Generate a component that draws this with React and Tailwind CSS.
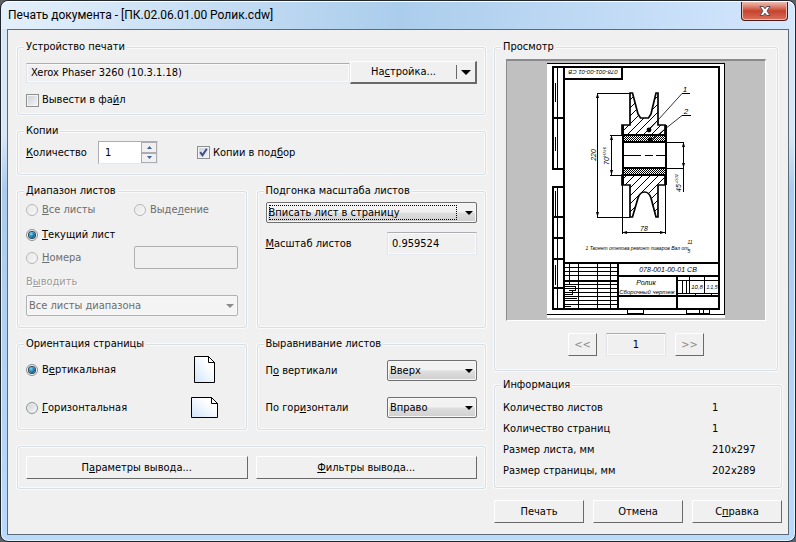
import React, { useState } from 'react';

function Group({ title, className = '', children }) {
  return (
    <fieldset className={`min-w-0 rounded-[3px] border border-[#d5dfe5] px-2 shadow-[0_0_0_1px_#fafafa,inset_0_0_0_1px_#fafafa] ${className}`}>
      {title && <legend className="-ml-0.5 bg-[#f0f0f0] px-0.5 leading-4">{title}</legend>}
      {children}
    </fieldset>
  );
}

function PushButton({ className = '', children, ...props }) {
  return (
    <button
      type="button"
      className={`h-[23px] border border-t-white border-r-[#696969] border-b-[#696969] border-l-white bg-[#f0f0f0] text-center whitespace-nowrap ${className}`}
      {...props}
    >
      {children}
    </button>
  );
}

function Check({ id, checked, onChange, children }) {
  return (
    <div className="flex h-4 items-center gap-[3px]">
      <span className="relative flex">
        <input
          id={id}
          type="checkbox"
          checked={checked}
          onChange={onChange}
          className="size-[13px] appearance-none border border-[#8e8f8f] bg-linear-to-br from-[#cbcfd5] to-[#f6f6f6] shadow-[inset_0_0_0_1px_#f4f4f4]"
        />
        {checked && (
          <svg viewBox="0 0 13 13" className="pointer-events-none absolute inset-0 size-[13px]" fill="none" stroke="#3c4f91" strokeWidth="2">
            <path d="M3.2 6.2 L5.5 9.3 L9.8 2.8" />
          </svg>
        )}
      </span>
      <label htmlFor={id}>{children}</label>
    </div>
  );
}

function Radio({ id, name, checked, disabled, onChange, children }) {
  return (
    <div className="flex h-4 items-center gap-1">
      <span className="relative flex">
        <input
          id={id}
          type="radio"
          name={name}
          checked={checked}
          disabled={disabled}
          onChange={onChange}
          className="size-3 appearance-none rounded-full border border-[#8e8f8f] bg-linear-to-br from-[#cdd1d5] to-[#f8f8f8] shadow-[inset_0_0_0_1px_#f4f4f4] disabled:border-[#b5b5b5] disabled:from-[#e6e6e6]"
        />
        {checked && (
          <span className="pointer-events-none absolute inset-[3px] rounded-full bg-radial-[at_35%_30%] from-[#7fd3f5] via-[#1a7fb4] to-[#0b2b4d] ring-1 ring-[#2b4458]" />
        )}
      </span>
      <label htmlFor={id} className={disabled ? 'text-[#6d6d6d]' : ''}>{children}</label>
    </div>
  );
}

function Select({ id, label, options, disabled, focused, className = '' }) {
  return (
    <span className={`relative flex h-[21px] ${className}`}>
      <select
        id={id}
        aria-label={label}
        disabled={disabled}
        className="w-full appearance-none rounded-[2px] border border-[#707070] bg-linear-to-b from-[#f2f2f2] from-45% via-[#dddddd] via-55% to-[#cfcfcf] pl-0.5 leading-[19px] text-black opacity-100 shadow-[inset_0_0_0_1px_#f8f8f8] outline-none disabled:border-[#adb2b5] disabled:bg-none disabled:bg-[#f4f4f4] disabled:text-[#6d6d6d]"
      >
        {options.map((o) => (
          <option key={o}>{o}</option>
        ))}
      </select>
      {focused && <span className="pointer-events-none absolute inset-y-[3px] right-5 left-[3px] border border-dotted border-black" />}
      <svg viewBox="0 0 8 4" className={`pointer-events-none absolute top-[9px] right-1 h-1 w-2 ${disabled ? 'fill-[#8c8c8c]' : 'fill-black'}`}>
        <path d="M0 0 H8 L4 4 Z" />
      </svg>
    </span>
  );
}

const fieldClass =
  'min-w-0 rounded-[1px] border border-t-[#abadb3] border-r-[#e2e3ea] border-b-[#e3e9ef] border-l-[#e2e3ea] bg-[#f0f0f0] shadow-[inset_0_0_0_1px_#fafafa] outline-none';

function PageIcon({ landscape }) {
  const [w, h] = landscape ? [27, 21] : [21, 27];
  return (
    <svg width={w} height={h} viewBox={`0 0 ${w} ${h}`} strokeWidth="1" stroke="#000">
      <defs>
        <linearGradient id={`page${w}`} x1="0" y1="1" x2="1" y2="0">
          <stop offset="0" stopColor="#cfe5fb" />
          <stop offset="0.7" stopColor="#fff" />
        </linearGradient>
      </defs>
      <path d={`M.5 .5 H${w - 6.5} L${w - 0.5} 6.5 V${h - 0.5} H.5 Z`} fill={`url(#page${w})`} />
      <path d={`M${w - 6.5} .5 V6.5 H${w - 0.5} Z`} fill="#fff" />
    </svg>
  );
}

// Title block and binding strips of the sheet
function SheetFrame() {
  const rows = [204, 208, 212, 221, 225, 229, 233, 237, 241];
  return (
    <g fill="none" stroke="#000">
      <path d="M0 .5 H177.5 V251.5 H0" />
      <g strokeWidth="2">
        <path d="M17 4 H172 V246 H17 Z M17 200 H172 M71 200 V246 M71 213 H172 M130 213 V246 M71 233 H172 M17 217.5 H71" />
        <path d="M17 16 H75 V4" />
        <path d="M6 4 H17 M6 3 V106 H17 M6 55 H17 M17 124 H6 V246 H17 M6 154 H17 M6 175 H17 M6 196 H17 M6 225 H17" />
      </g>
      <path d="M10.5 4 V106 M10.5 124 V246 M8.5 20 V39 M8.5 74 V88 M8.5 128 V153 M8.5 202 V222" />
      <path d="M22.5 200 V221 M31.5 200 V246 M50.5 200 V246 M63.5 200 V246" />
      {rows.map((y) => (
        <path key={y} d={`M17 ${y}.5 H71`} />
      ))}
      <path d="M18 223.5 H28 V227.5 H22 M18 231.5 H25 V227 M18 235.5 H30 M18 243.5 H24" />
      <path d="M130 217.5 H172 M130 230.5 H172 M135.5 217 V230 M139.5 217 V230 M142.5 213 V230 M157.5 213 V230 M148.5 230 V233 M164.5 230 V233" />
      <path d="M80.5 246 V250.5 H96.5 V246 M139.5 246 V250.5 H162.5 V246 M152.5 246 V250 M156.5 246 V250" />
    </g>
  );
}

function Drawing() {
  return (
    <svg viewBox="0 0 178 255" className="h-[255px] w-[178px] bg-white" role="img" aria-label="Ролик">
      <defs>
        <pattern id="hatch" width="8" height="8" patternUnits="userSpaceOnUse">
          <path d="M-1 9 L9 -1" stroke="#000" strokeWidth="1" />
        </pattern>
        <pattern id="mesh" width="2" height="2" patternUnits="userSpaceOnUse">
          <rect width="1" height="1" />
          <rect x="1" y="1" width="1" height="1" />
        </pattern>
      </defs>
      <g shapeRendering="crispEdges">
        <SheetFrame />
      </g>
      {/* roller section */}
      <g stroke="#000" strokeWidth="1.7" fill="url(#hatch)">
        <path d="M75 72 V62 H83 V30 H85.5 L91 51 L93.5 55 H101.5 L104 51 L109 30 H111 V62 H118 V72 Z" />
        <path d="M75 112 V122 H83 V154 H85.5 L91 135 Q93 129 97.5 129 Q102 129 104 135 L109 154 H111 V122 H118 V112 Z" />
      </g>
      <g stroke="#000" strokeWidth="1" fill="url(#mesh)" shapeRendering="crispEdges">
        <rect x="75.5" y="72.5" width="43" height="6" />
        <rect x="75.5" y="105.5" width="43" height="6" />
      </g>
      <g stroke="#000" fill="none" shapeRendering="crispEdges">
        <path d="M75 72 H118 M75 79 H118 M75 105 H118 M75 112 H118" strokeWidth="2" />
        <path d="M75.5 62 V122 M118.5 62 V122" strokeWidth="2" />
        <path d="M75 92.5 H94 M98 92.5 H106 M109 92.5 H118" />
        <path d="M50.5 30 V154 M50 30.5 H83 M50 154.5 H83" />
        <path d="M64.5 72 V112 M63 72.5 H75 M63 112.5 H75" />
        <path d="M136.5 79 V129 M118 79.5 H137 M118 105.5 H137" />
        <path d="M75.5 122 V171 M118.5 122 V171 M75 169.5 H118" />
        <path d="M135 30.5 H143 M135 52.5 H144" />
      </g>
      <path d="M102 67 L135 30.5 M103 78 L135 52.5" stroke="#000" strokeWidth="0.8" />
      <circle cx="102" cy="67" r="2.4" />
      <circle cx="103" cy="77" r="2.4" />
      <path d="M49 35 L50.5 30 L52 35 Z M49 149 L50.5 154 L52 149 Z M63 77 L64.5 72 L66 77 Z M63 107 L64.5 112 L66 107 Z M135 84 L136.5 79 L138 84 Z M135 100 L136.5 105 L138 100 Z M80 168 L75 169.5 L80 171 Z M113 168 L118 169.5 L113 171 Z" />
      <g className="font-['Liberation_Sans',sans-serif] italic" fontSize="7" textAnchor="middle">
        <text transform="translate(46 7) rotate(180)" fontSize="6">078-001-00-01 СВ</text>
        <text transform="translate(49 92) rotate(-90)">220</text>
        <text transform="translate(62 98) rotate(-90)">70</text>
        <text transform="translate(59 89) rotate(-90)" fontSize="4">H7/r6</text>
        <text transform="translate(134 125) rotate(-90)">45</text>
        <text transform="translate(131 116) rotate(-90)" fontSize="4">+0,02</text>
        <text x="138" y="29" fontSize="8">1</text>
        <text x="139" y="51" fontSize="8">2</text>
        <text x="97" y="168">78</text>
        <text x="90" y="187" fontSize="5">1 Твоент отелова ремонт пиваров Вал от</text>
        <text x="143" y="181" fontSize="5">11</text>
        <text x="142" y="190" fontSize="5">5</text>
        <text x="121" y="209" fontSize="7">078-001-00-01 СВ</text>
        <text x="99" y="222">Ролик</text>
        <text x="100" y="231" fontSize="6">Сборочный чертеж</text>
        <text x="150" y="226" fontSize="6">10,8</text>
        <text x="165" y="226" fontSize="5">1:1,5</text>
      </g>
    </svg>
  );
}

const info = [
  ['Количество листов', '1'],
  ['Количество страниц', '1'],
  ['Размер листа, мм', '210x297'],
  ['Размер страницы, мм', '202x289'],
];

export default function App() {
  const [toFile, setToFile] = useState(false);
  const [collate, setCollate] = useState(true);
  const [copies, setCopies] = useState(1);
  const [orientation, setOrientation] = useState('portrait');

  return (
    <div className="bg-[#5c6066]">
      <div className="rounded-lg border border-[#20262e] bg-linear-to-b from-[#d8e7f6] from-25% via-[#a9cbee] via-35% to-[#b9dafa] px-1.5 pb-1.5 font-['DejaVu_Sans_Condensed','Noto_Sans',sans-serif] text-[11px] leading-4 text-black shadow-[inset_0_0_0_1px_#e4f2fd]">
        <header className="-mx-[5px] flex h-7 items-start justify-between rounded-t-[7px] border-t border-white bg-linear-to-r from-[#e4f0fb] via-[#abcdec] via-50% to-[#d4e7fd] pr-1.5 pl-1.5">
          <h1 className="py-[5px] font-['Roboto',sans-serif] text-[12px] leading-4">Печать документа - [ПК.02.06.01.00 Ролик.cdw]</h1>
          <button
            type="button"
            aria-label="Закрыть"
            className="flex h-[19px] w-[47px] items-center justify-center rounded-b-[4px] border border-t-0 border-[#4a1a1a] bg-linear-to-b from-[#e8a79b] from-10% via-[#c6412c] via-50% to-[#d8705a] shadow-[inset_0_0_0_1px_#f0b8ad]"
          >
            <svg viewBox="0 0 12 10" className="h-2.5 w-3" fill="#fff" stroke="#4d4f5c" strokeWidth="1">
              <path d="M1 .5 H4.2 L6 2.8 L7.8 .5 H11 L8 5 L11 9.5 H7.8 L6 7.2 L4.2 9.5 H1 L4 5 Z" />
            </svg>
          </button>
        </header>

        <main className="flex gap-2 border border-[#5b6b7a] bg-[#f0f0f0] pt-[9px] pr-1.5 pb-[11px] pl-[9px]">
          <div className="flex min-w-0 flex-1 flex-col gap-2">
            <Group title="Устройство печати" className="pb-1.5">
              <div className="flex items-center pt-1.5">
                <input aria-label="Устройство печати" readOnly value="Xerox Phaser 3260 (10.3.1.18)" className={`h-5 flex-1 px-1 ${fieldClass}`} />
                <PushButton className="flex w-[127px] items-center border-r-2 border-b-2">
                  <span className="flex-1">На<u>с</u>тройка...</span>
                  <span className="h-3.5 border-l border-[#696969]" />
                  <svg viewBox="0 0 10 5" className="mx-1 h-[5px] w-2.5">
                    <path d="M0 0 H10 L5 5 Z" />
                  </svg>
                </PushButton>
              </div>
              <div className="mt-2">
                <Check id="to-file" checked={toFile} onChange={() => setToFile(!toFile)}>Вывести в фа<u>й</u>л</Check>
              </div>
            </Group>

            <Group title="Копии" className="pb-2.5">
              <div className="flex items-center pt-0.5">
                <label htmlFor="copies" className="w-[72px]"><u>К</u>оличество</label>
                <span className="mr-[39px] flex h-[23px] w-[60px] border border-[#abadb3] border-r-[#e2e3ea] border-b-[#e3e9ef] bg-white">
                  <input id="copies" value={copies} onChange={(e) => setCopies(Number(e.target.value) || 1)} className="min-w-0 flex-1 px-1.5 outline-none" />
                  <span className="flex w-4 flex-col">
                    <button type="button" aria-label="Больше" onClick={() => setCopies(copies + 1)} className="flex flex-1 items-center justify-center border border-[#abadb3] bg-[#f0f0f0]">
                      <svg viewBox="0 0 5 3" className="h-[3px] w-[5px] fill-[#3f5fa8]"><path d="M0 3 H5 L2.5 0 Z" /></svg>
                    </button>
                    <button type="button" aria-label="Меньше" onClick={() => setCopies(Math.max(1, copies - 1))} className="flex flex-1 items-center justify-center border border-[#abadb3] bg-[#f0f0f0]">
                      <svg viewBox="0 0 5 3" className="h-[3px] w-[5px] fill-[#3f5fa8]"><path d="M0 0 H5 L2.5 3 Z" /></svg>
                    </button>
                  </span>
                </span>
                <Check id="collate" checked={collate} onChange={() => setCollate(!collate)}>Копии в под<u>б</u>ор</Check>
              </div>
            </Group>

            <div className="grid grid-cols-2 gap-x-2.5 gap-y-2">
              <Group title="Диапазон листов" className="pb-[11px]">
                <div className="grid grid-cols-[108px_1fr] items-center pt-[3px]">
                  <Radio id="all" name="range" disabled><u>В</u>се листы</Radio>
                  <Radio id="selection" name="range" disabled>Выде<u>л</u>ение</Radio>
                  <div className="col-span-2 mt-[9px] mb-[3px]">
                    <Radio id="current" name="range" checked onChange={() => {}}><u>Т</u>екущий лист</Radio>
                  </div>
                  <Radio id="numbers" name="range" disabled><u>Н</u>омера</Radio>
                  <input aria-label="Номера" disabled className="h-[23px] w-full min-w-0 rounded-[2px] border border-[#afafaf] bg-[#f0f0f0] px-1" />
                </div>
                <label htmlFor="output" className="mt-[5px] mb-[5px] block text-[#9a9a9a] [text-shadow:1px_1px_0_#fff]">В<u>ы</u>водить</label>
                <Select id="output" disabled options={['Все листы диапазона']} />
              </Group>

              <Group title={<>По<u>д</u>гонка масштаба листов</>}>
                <Select label="Подгонка масштаба листов" focused options={['Вписать лист в страницу']} className="mt-[3px]" />
                <div className="mt-[9px] flex items-center justify-between">
                  <label htmlFor="scale"><u>М</u>асштаб листов</label>
                  <input id="scale" readOnly value="0.959524" className={`h-[23px] w-[90px] px-1 ${fieldClass}`} />
                </div>
              </Group>

              <Group title="Ориентация страницы" className="pb-[7px]">
                <div className="grid grid-cols-[1fr_27px] items-center justify-items-start gap-y-2.5 pt-1 pr-5">
                  <Radio id="portrait" name="orientation" checked={orientation === 'portrait'} onChange={() => setOrientation('portrait')}>В<u>е</u>ртикальная</Radio>
                  <span className="flex w-full justify-center"><PageIcon /></span>
                  <Radio id="landscape" name="orientation" checked={orientation === 'landscape'} onChange={() => setOrientation('landscape')}><u>Г</u>оризонтальная</Radio>
                  <span className="my-1 flex w-full justify-center"><PageIcon landscape /></span>
                </div>
              </Group>

              <Group title="Выравнивание листов">
                <div className="grid grid-cols-[1fr_90px] items-center gap-y-4 pt-2">
                  <label htmlFor="valign">П<u>о</u> вертикали</label>
                  <Select id="valign" options={['Вверх', 'По центру', 'Вниз']} />
                  <label htmlFor="halign">По гор<u>и</u>зонтали</label>
                  <Select id="halign" options={['Вправо', 'По центру', 'Влево']} />
                </div>
              </Group>
            </div>

            <Group className="mt-2 grid grid-cols-2 gap-2 py-[9px]">
              <PushButton>П<u>а</u>раметры вывода...</PushButton>
              <PushButton><u>Ф</u>ильтры вывода...</PushButton>
            </Group>
          </div>

          <div className="flex w-[288px] flex-col">
            <Group title="Просмотр" className="mr-1 pb-3.5">
              <div className="mx-[3px] mt-1 flex h-[262px] justify-center border border-t-2 border-[#8a8a8a] border-r-white border-b-white bg-[#c0c0c0] pt-0.5">
                <Drawing />
              </div>
              <div className="mt-3 flex justify-center gap-[9px]">
                <PushButton disabled className="w-[29px] text-[#8a8a8a]">&lt;&lt;</PushButton>
                <input aria-label="Страница" readOnly value="1" className={`h-[23px] w-[60px] text-center ${fieldClass}`} />
                <PushButton disabled className="w-[29px] text-[#8a8a8a]">&gt;&gt;</PushButton>
              </div>
            </Group>

            <Group title="Информация" className="mt-1.5 pt-1 pb-1.5">
              <table className="w-full">
                <tbody>
                  {info.map(([name, value]) => (
                    <tr key={name} className="h-[21px]">
                      <th scope="row" className="text-left font-normal">{name}</th>
                      <td className="w-[61px]">{value}</td>
                    </tr>
                  ))}
                </tbody>
              </table>
            </Group>

            <div className="mt-3 grid grid-cols-3 gap-[9px]">
              <PushButton>Печать</PushButton>
              <PushButton>Отмена</PushButton>
              <PushButton>С<u>п</u>равка</PushButton>
            </div>
          </div>
        </main>
      </div>
    </div>
  );
}
